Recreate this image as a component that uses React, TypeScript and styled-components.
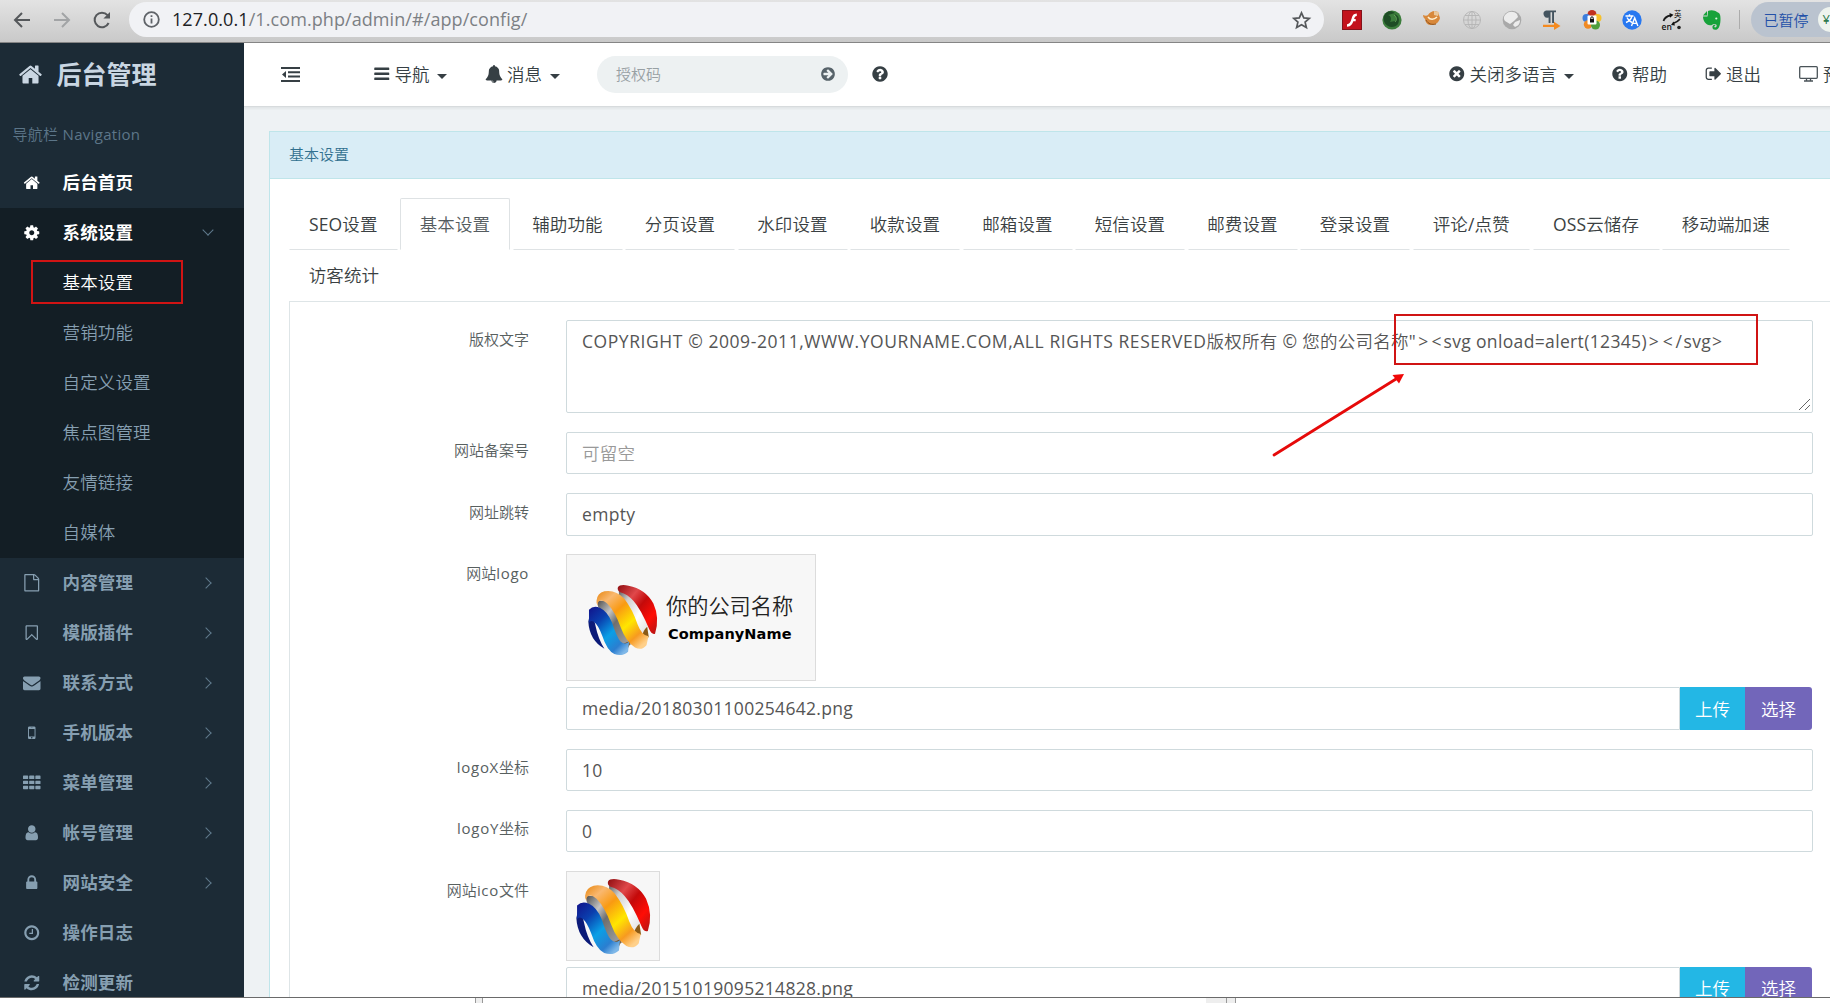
import React from "react";
import styled, { createGlobalStyle } from "styled-components";

const LIGHT = '"Open Sans", "Noto Sans CJK SC DemiLight", "Noto Sans CJK SC", sans-serif';
const BOLD = '"Open Sans", "Noto Sans CJK SC", sans-serif';

const Global = createGlobalStyle`
  * { box-sizing: border-box; }
  body { margin: 0; overflow: hidden; background: #fff; font-family: ${LIGHT}; font-size: 17.5px; color: #3a3f42; }
`;

/* ---------- icon glyphs, 1792-unit em square ---------- */
const RING = "M1664 896q0 209-103 385.5t-279.5 279.5-385.5 103-385.5-103-279.5-279.5-103-385.5 103-385.5 279.5-279.5 385.5-103 385.5 103 279.5 279.5 103 385.5z";
const GLYPHS: Record<string, string> = {
  home: "M1472 992v480q0 26-19 45t-45 19h-384v-384h-256v384h-384q-26 0-45-19t-19-45v-480q0-1 .5-3t.5-3l575-474 575 474q1 2 1 6zm223-69l-62 74q-8 9-21 11h-3q-13 0-21-7l-692-577-692 577q-12 8-24 7-13-2-21-11l-62-74q-8-10-7-23.5t11-21.5l719-599q32-26 76-26t76 26l244 204v-195q0-14 9-23t23-9h192q14 0 23 9t9 23v408l219 182q10 8 11 21.5t-7 23.5z",
  cog: "M1152 896q0-106-75-181t-181-75-181 75-75 181 75 181 181 75 181-75 75-181zm512-109v222q0 12-8 23t-20 13l-185 28q-19 54-39 91 35 50 107 138 10 12 10 25t-9 23q-27 37-99 108t-94 71q-12 0-26-9l-138-108q-44 23-91 38-16 136-29 186-7 28-36 28h-222q-14 0-24.5-8.5t-11.5-21.5l-28-184q-49-16-90-37l-141 107q-10 9-25 9-14 0-25-11-126-114-165-168-7-10-7-23 0-12 8-23 15-21 51-66.5t54-70.5q-27-50-41-99l-183-27q-13-2-21-12.5t-8-23.5v-222q0-12 8-23t19-13l186-28q14-46 39-92-40-57-107-138-10-12-10-24 0-10 9-23 26-36 98.5-107.5t94.5-71.5q13 0 26 10l138 107q44-23 91-38 16-136 29-186 7-28 36-28h222q14 0 24.5 8.5t11.5 21.5l28 184q49 16 90 37l142-107q9-9 24-9 13 0 25 10 129 119 165 170 7 8 7 22 0 12-8 23-15 21-51 66.5t-54 70.5q26 50 41 98l183 28q13 2 21 12.5t8 23.5z",
  file: "M1596 380q28 28 48 76t20 88v1152q0 40-28 68t-68 28h-1344q-40 0-68-28t-28-68v-1600q0-40 28-68t68-28h896q40 0 88 20t76 48zm-444-244v376h376q-10-29-22-41l-313-313q-12-12-41-22zm384 1528v-1024h-416q-40 0-68-28t-28-68v-416h-768v1536h1280z",
  bookmark: "M1408 256h-1024v1242l423-406 89-85 89 85 423 406v-1242zm12-128q23 0 44 9 33 13 52.5 41t19.5 62v1289q0 34-19.5 62t-52.5 41q-19 8-44 8-48 0-83-32l-441-424-441 424q-36 33-83 33-23 0-44-9-33-13-52.5-41t-19.5-62v-1289q0-34 19.5-62t52.5-41q21-9 44-9h1048z",
  envelope: "M1792 710v794q0 66-47 113t-113 47h-1472q-66 0-113-47t-47-113v-794q44 49 101 87 362 246 497 345 57 42 92.5 65.5t94.5 48 110 24.5h2q51 0 110-24.5t94.5-48 92.5-65.5q170-123 498-345 57-39 100-87zm0-294q0 79-49 151t-122 123q-376 261-468 325-10 7-42.5 31t-54 38.5-52 32.5-57.5 27-50 9h-2q-23 0-50-9t-57.5-27-52-32.5-54-38.5-42.5-31q-91-64-262-182.5t-205-142.5q-62-42-117-115.5t-55-136.5q0-78 41.5-130t118.5-52h1472q65 0 112.5 47t47.5 113z",
  mobile: "M976 1408q0-33-23.5-56.5t-56.5-23.5-56.5 23.5-23.5 56.5 23.5 56.5 56.5 23.5 56.5-23.5 23.5-56.5zm208-160v-704q0-13-9.5-22.5t-22.5-9.5h-512q-13 0-22.5 9.5t-9.5 22.5v704q0 13 9.5 22.5t22.5 9.5h512q13 0 22.5-9.5t9.5-22.5zm-192-848q0-16-16-16h-160q-16 0-16 16t16 16h160q16 0 16-16zm288-16v1024q0 52-38 90t-90 38h-512q-52 0-90-38t-38-90v-1024q0-52 38-90t90-38h512q52 0 90 38t38 90z",
  grid: "M64 160h400a64 64 0 0 1 64 64v224a64 64 0 0 1-64 64h-400a64 64 0 0 1-64-64v-224a64 64 0 0 1 64-64zm632 0h400a64 64 0 0 1 64 64v224a64 64 0 0 1-64 64h-400a64 64 0 0 1-64-64v-224a64 64 0 0 1 64-64zm632 0h400a64 64 0 0 1 64 64v224a64 64 0 0 1-64 64h-400a64 64 0 0 1-64-64v-224a64 64 0 0 1 64-64zM64 680h400a64 64 0 0 1 64 64v224a64 64 0 0 1-64 64h-400a64 64 0 0 1-64-64v-224a64 64 0 0 1 64-64zm632 0h400a64 64 0 0 1 64 64v224a64 64 0 0 1-64 64h-400a64 64 0 0 1-64-64v-224a64 64 0 0 1 64-64zm632 0h400a64 64 0 0 1 64 64v224a64 64 0 0 1-64 64h-400a64 64 0 0 1-64-64v-224a64 64 0 0 1 64-64zM64 1200h400a64 64 0 0 1 64 64v224a64 64 0 0 1-64 64h-400a64 64 0 0 1-64-64v-224a64 64 0 0 1 64-64zm632 0h400a64 64 0 0 1 64 64v224a64 64 0 0 1-64 64h-400a64 64 0 0 1-64-64v-224a64 64 0 0 1 64-64zm632 0h400a64 64 0 0 1 64 64v224a64 64 0 0 1-64 64h-400a64 64 0 0 1-64-64v-224a64 64 0 0 1 64-64z",
  user: "M1536 1399q0 109-62.5 187t-150.5 78h-854q-88 0-150.5-78t-62.5-187q0-85 8.5-160.5t31.5-152 58.5-131 94-89 134.5-34.5q131 128 313 128t313-128q76 0 134.5 34.5t94 89 58.5 131 31.5 152 8.5 160.5zm-256-887q0 159-112.5 271.5t-271.5 112.5-271.5-112.5-112.5-271.5 112.5-271.5 271.5-112.5 271.5 112.5 112.5 271.5z",
  lock: "M640 768h512v-192q0-106-75-181t-181-75-181 75-75 181v192zm832 96v576q0 40-28 68t-68 28h-960q-40 0-68-28t-28-68v-576q0-40 28-68t68-28h32v-192q0-184 132-316t316-132 316 132 132 316v192h32q40 0 68 28t28 68z",
  clock: "M1024 544v448q0 14-9 23t-23 9h-320q-14 0-23-9t-9-23v-64q0-14 9-23t23-9h224v-352q0-14 9-23t23-9h64q14 0 23 9t9 23zm416 352q0-148-73-273t-198-198-273-73-273 73-198 198-73 273 73 273 198 198 273 73 273-73 198-198 73-273z" + RING,
  refresh: "M1639 1056q0 5-1 7-64 268-268 434.5t-478 166.5q-146 0-282.5-55t-243.5-157l-129 129q-19 19-45 19t-45-19-19-45v-448q0-26 19-45t45-19h448q26 0 45 19t19 45-19 45l-137 137q71 66 161 102t187 36q134 0 250-65t186-179q11-17 53-117 8-23 30-23h192q13 0 22.5 9.5t9.5 22.5zm25-800v448q0 26-19 45t-45 19h-448q-26 0-45-19t-19-45 19-45l138-138q-148-137-349-137-134 0-250 65t-186 179q-11 17-53 117-8 23-30 23h-199q-13 0-22.5-9.5t-9.5-22.5v-7q65-268 270-434.5t480-166.5q146 0 284 55.5t245 156.5l130-129q19-19 45-19t45 19 19 45z",
  bars: "M192 256h1408q64 0 64 64v128q0 64-64 64h-1408q-64 0-64-64v-128q0-64 64-64zm0 512h1408q64 0 64 64v128q0 64-64 64h-1408q-64 0-64-64v-128q0-64 64-64zm0 512h1408q64 0 64 64v128q0 64-64 64h-1408q-64 0-64-64v-128q0-64 64-64z",
  bell: "M912 1696q0-16-16-16-59 0-101.5-42.5t-42.5-101.5q0-16-16-16t-16 16q0 73 51.5 124.5t124.5 51.5q16 0 16-16zm816-288q0 52-38 90t-90 38h-448q0 106-75 181t-181 75-181-75-75-181h-448q-52 0-90-38t-38-90q50-42 91-88t85-119.5 74.5-158.5 50-206 19.5-260q0-152 117-282.5t307-158.5q-8-19-8-39 0-40 28-68t68-28 68 28 28 68q0 20-8 39 190 28 307 158.5t117 282.5q0 139 19.5 260t50 206 74.5 158.5 85 119.5 91 88z",
  times: "M1277 1122q0-26-19-45l-181-181 181-181q19-19 19-45 0-27-19-46l-90-90q-19-19-46-19-26 0-45 19l-181 181-181-181q-19-19-45-19-27 0-46 19l-90 90q-19 19-19 46 0 26 19 45l181 181-181 181q-19 19-19 45 0 27 19 46l90 90q19 19 46 19 26 0 45-19l181-181 181 181q19 19 45 19 27 0 46-19l90-90q19-19 19-46z" + RING,
  question: "M1024 1376v-192q0-14-9-23t-23-9h-192q-14 0-23 9t-9 23v192q0 14 9 23t23 9h192q14 0 23-9t9-23zm256-672q0-88-55.5-163t-138.5-116-170-41q-243 0-371 213-15 24 8 42l132 100q7 6 19 6 16 0 25-12 53-68 86-92 34-24 86-24 48 0 85.5 26t37.5 59q0 38-20 61t-68 45q-63 28-115.5 86.5t-52.5 125.5v36q0 14 9 23t23 9h192q14 0 23-9t9-23q0-19 21.5-49.5t54.5-49.5q32-18 49-28.5t46-35 44.5-48 28-60.5 12.5-81z" + RING,
  signout: "M704 1440q0 4 1 20t.5 26.5-3 23.5-10 19.5-20.5 6.5h-320q-119 0-203.5-84.5t-84.5-203.5v-704q0-119 84.5-203.5t203.5-84.5h320q13 0 22.5 9.5t9.5 22.5q0 4 1 20t.5 26.5-3 23.5-10 19.5-20.5 6.5h-320q-66 0-113 47t-47 113v704q0 66 47 113t113 47h312l11.5 1 11.5 3 8 5.5 7 9 2 13.5zm928-544q0 26-19 45l-544 544q-19 19-45 19t-45-19-19-45v-288h-448q-26 0-45-19t-19-45v-384q0-26 19-45t45-19h448v-288q0-26 19-45t45-19 45 19l544 544q19 19 19 45z",
  go: "M1413 896q0-27-18-45l-91-91-362-362q-18-18-45-18t-45 18l-91 91q-18 18-18 45t18 45l189 189h-502q-26 0-45 19t-19 45v128q0 26 19 45t45 19h502l-189 189q-19 19-19 45t19 45l91 91q18 18 45 18t45-18l362-362 91-91q18-18 18-45z" + RING,
};

const Svg = styled.svg`display: block; flex: none; overflow: visible;`;
const Glyph = ({ name, size = 17.5 }: { name: string; size?: number }) => (
  <Svg width={size} height={size} viewBox="0 0 1792 1792" fill="currentColor" fillRule="evenodd">
    <path d={GLYPHS[name]} />
  </Svg>
);

/* ---------- browser bar ---------- */
const Page = styled.div`position: relative; width: 1830px; height: 1003px; display: flex; flex-direction: column; overflow: hidden;`;
const Browser = styled.div`
  flex: none; height: 43px; display: flex; align-items: flex-start; padding-top: 2px; overflow: hidden;
  background: linear-gradient(#e3e3e3, #c9c9c9); border-bottom: 1px solid #858585;
`;
const NavIcons = styled.div`flex: none; display: flex; align-items: center; height: 35px; padding-left: 12px; gap: 20px; width: 129px;`;
const Omnibox = styled.div`
  flex: none; width: 1195px; height: 35px; border-radius: 18px; background: #f1f2f5; display: flex; align-items: center; padding: 0 13px 0 14px;
`;
const Url = styled.div`
  flex: 1; margin-left: 12px; font-size: 18px; letter-spacing: 0.08px; color: #7c8084; line-height: 33px;
  b { font-weight: 400; color: #202124; }
`;
const Extensions = styled.div`flex: none; display: flex; align-items: center; height: 35px; margin-left: 17.5px; gap: 20px;`;
const Divider = styled.div`flex: none; width: 1px; height: 19px; margin: 8px 0 0 17px; background: #acacac;`;
const Paused = styled.div`
  flex: none; width: 110px; height: 35px; margin-left: 11px; border-radius: 18px 0 0 18px; background: #bac3cf;
  display: flex; align-items: center; padding-left: 13px; gap: 9px; color: #2350a8; font-size: 15px; white-space: nowrap;
`;
const Avatar = styled.div`
  flex: none; width: 25px; height: 25px; border-radius: 50%; background: #eef3ee; color: #2f7a4c; font-size: 13px; line-height: 24px; padding-left: 5px;
`;

const Ext = ({ children }: { children: React.ReactNode }) => <Svg width="20" height="20" viewBox="0 0 20 20">{children}</Svg>;

const BrowserBar = () => (
  <Browser>
    <NavIcons>
      <Svg width="20" height="18" viewBox="0 0 20 18" fill="none" stroke="#55585b" strokeWidth="2"><path d="M18 9H3M10 2L3 9l7 7" /></Svg>
      <Svg width="20" height="18" viewBox="0 0 20 18" fill="none" stroke="#a2a4a6" strokeWidth="2"><path d="M2 9h15M10 2l7 7-7 7" /></Svg>
      <Svg width="20" height="18" viewBox="0 0 20 18" fill="none" stroke="#55585b" strokeWidth="2"><path d="M16.6 12A7.3 7.3 0 1 1 15.5 4.2" /><path d="M18 1v6.6h-6.6z" fill="#55585b" stroke="none" /></Svg>
    </NavIcons>
    <Omnibox>
      <Svg width="17" height="17" viewBox="0 0 17 17" fill="none" stroke="#5f6368" strokeWidth="1.8"><circle cx="8.5" cy="8.5" r="7.3" /><path d="M8.5 7.6v5M8.5 4.2v1.8" /></Svg>
      <Url><b>127.0.0.1</b>/1.com.php/admin/#/app/config/</Url>
      <Svg width="19" height="18" viewBox="0 0 19 18" fill="none" stroke="#55585b" strokeWidth="1.7"><path d="M9.5 1.8l2.3 5.1 5.5.5-4.2 3.7 1.3 5.5-4.9-2.9-4.9 2.9 1.3-5.5-4.1-3.7 5.5-.5z" /></Svg>
    </Omnibox>
    <Extensions>
      <Ext>
        <rect x=".5" y=".5" width="19" height="19" fill="#c3121c" stroke="#84121a" />
        <path d="M14.8 3.6c-3.3.2-4.2 2-5 4.3-1 3-1.7 5.9-4.8 6.4v2.5c4.3-.3 5.5-3.3 6.3-5.6h2.4V8.900h-1.600c.6-1.700 1.100-2.800 2.700-2.900z" fill="#fff" />
      </Ext>
      <Ext>
        <circle cx="10" cy="10" r="9.600" fill="#3c7d3c" /><path d="M2 6C4 1 9 0 13 3L6 5c3 1 4 4 2 7l5-1c2-2 1-6-1-7 5 1 6 6 4 10-2 3-7 4-10 2C2 14 1 9 2 6z" fill="#1e4d25" /><path d="M12 5c3 2 3 5 1 7" stroke="#69a85c" fill="none" />
      </Ext>
      <Ext>
        <path d="M1 5c2 1 4 1 5 0 1-2 4-4 7-4l3 1 1 3 1 3c-1 4-4 7-8 7-5 0-6-2-7-6C2 8 1 7 1 5z" fill="#d8883a" /><path d="M12 1l5 1-1 4-4-1z" fill="#e9c79a" /><path d="M6 7c2 3 6 3 9 0" stroke="#fff0d0" fill="none" strokeWidth="1.500" /><path d="M4 10c2 4 6 5 10 4" stroke="#8f5522" fill="none" />
      </Ext>
      <Ext>
        <g fill="none" stroke="#b4b4b4" strokeWidth=".9"><circle cx="10" cy="10" r="8.500" /><ellipse cx="10" cy="10" rx="4" ry="8.500" /><path d="M10 1.500v17M1.500 10h17M3 5.500h14M3 14.500h14" /></g>
      </Ext>
      <Ext>
        <circle cx="10" cy="10" r="9.300" fill="#a9a9a9" /><path d="M4 4c3-3 8-3 11 0l1 3-4 4-4 3-5-3C1 8 2 6 4 4zM13 12l5-2c0 4-2 6-5 7l-2-2z" fill="#ececec" />
      </Ext>
      <Ext>
        <path d="M6 .5h10v1.800h-2V13h-1.900V2.300h-1.600V13H8.600V7.500A3.600 3.600 0 0 1 6 .5z" fill="#44545f" transform="translate(-2 0)" /><path d="M1 14.800h11v-3l6.500 4.200-6.500 4v-3H1z" fill="#f58a1f" />
      </Ext>
      <Ext>
        <circle cx="10" cy="4.500" r="4.500" fill="#c1301f" /><circle cx="4.500" cy="8" r="4" fill="#3b7ddd" /><circle cx="15.500" cy="8" r="4" fill="#f6c12c" /><circle cx="6" cy="14.500" r="4.200" fill="#f08a24" /><circle cx="13.500" cy="15" r="4.500" fill="#4f9e3b" /><rect x="5.500" y="5.500" width="9" height="9" rx="1" fill="#fff" /><rect x="8" y="9" width="4" height="3.500" fill="#111" /><path d="M8.800 9V8a1.200 1.200 0 0 1 2.400 0v1" stroke="#111" fill="none" />
      </Ext>
      <Ext>
        <circle cx="10" cy="10" r="9.700" fill="#2878f0" /><g fill="none" stroke="#fff" strokeWidth="1.400"><path d="M3.500 6h8M7.500 4.300V6M10 6c-.8 3-3 5.300-6 6.500M5 7.500c1 2.300 2.700 4 5 5" /><path d="M9.500 16l3.200-8 3.200 8M10.600 13.400h4.200" /></g>
      </Ext>
      <Ext>
        <g fill="none" stroke="#1c1c1c"><path d="M1.500 11c1-3 4-5 7-5.500" strokeWidth="1.800" /><path d="M11 13.500c3-1 5-2 7-4.500" strokeWidth="1.800" /></g>
        <path d="M7.500 3l4 1.800-3.500 3zM11.500 11.500l-2.500 3.500 4 .5z" fill="#111" />
        <text x="-.5" y="19.500" fontFamily="Open Sans, sans-serif" fontSize="8.500" fontWeight="600" fill="#111">en</text>
        <text x="12" y="7" fontFamily="Noto Sans CJK SC, sans-serif" fontSize="7.500" fill="#111">英</text>
        <circle cx="17" cy="17.500" r="1.800" fill="#222" />
      </Ext>
      <Ext>
        <path d="M6 1c3-1.500 7-.8 9 1 3 1 3.500 3 3.500 7 0 5-1 9-3.500 10.500-3 1-5-.5-4.500-3 .3-1.500 2-2 3-1.500-.2 1-1.300 1-1.300 2 .8 1 2.300.3 2.500-1 .2-1.500-1-2.200-2.700-2-1.500.2-2 1.500-4 1.300C4 15 1 11 1 6.500h4.500z" fill="#17a23a" /><path d="M1 5.500L5 1v4.500z" fill="#17a23a" /><circle cx="14.300" cy="8.500" r="1.100" fill="#d9f0dd" />
      </Ext>
    </Extensions>
    <Divider />
    <Paused>已暂停<Avatar>¥</Avatar></Paused>
  </Browser>
);

/* ---------- sidebar ---------- */
const Body = styled.div`flex: none; height: 954px; display: flex; overflow: hidden;`;
const Side = styled.nav`flex: none; width: 244px; background: #1c2b36; color: #869fb1;`;
const Brand = styled.div`
  height: 62px; display: flex; align-items: center; padding-left: 18px; gap: 13.5px; color: #c9d6e2; font: 700 25px/58px ${BOLD};
`;
const SideTitle = styled.div`height: 53px; padding-left: 12.5px; line-height: 58px; font-size: 15px; color: #5c7689; letter-spacing: 0.3px;`;
const Group = styled.div<{ $open?: boolean }>`background: ${p => (p.$open ? "#131e25" : "transparent")}; color: ${p => (p.$open ? "#fff" : "inherit")};`;
const Item = styled.a<{ $on?: boolean }>`
  height: 50px; display: flex; align-items: center; font: 700 17.5px/46px ${BOLD}; color: ${p => (p.$on ? "#fff" : "inherit")};
`;
const ItemIcon = styled.span`width: 62.5px; padding-left: 1px; display: flex; justify-content: center;`;
const ItemText = styled.span`width: 136.5px; padding-bottom: 2px; letter-spacing: 0.15px;`;
const Chevron = styled.span<{ $down?: boolean }>`
  width: 8px; height: 8px; margin-left: ${p => (p.$down ? 5 : 2.5)}px; margin-top: ${p => (p.$down ? -6 : 0)}px;
  border: solid #5f7a8c; border-width: 0 1.5px 1.5px 0; transform: rotate(${p => (p.$down ? 45 : -45)}deg);
`;
const SubItem = styled.a<{ $on?: boolean }>`
  display: block; height: 50px; padding-left: 62.5px; line-height: 48px; letter-spacing: 0.15px; color: ${p => (p.$on ? "#fff" : "#869fb1")};
`;

const SUB = ["基本设置", "营销功能", "自定义设置", "焦点图管理", "友情链接", "自媒体"];
const MENU: [string, string, boolean][] = [
  ["file", "内容管理", true], ["bookmark", "模版插件", true], ["envelope", "联系方式", true], ["mobile", "手机版本", true],
  ["grid", "菜单管理", true], ["user", "帐号管理", true], ["lock", "网站安全", true], ["clock", "操作日志", false], ["refresh", "检测更新", false],
];

const Sidebar = () => (
  <Side>
    <Brand><Glyph name="home" size={25} />后台管理</Brand>
    <SideTitle>导航栏 Navigation</SideTitle>
    <Item $on><ItemIcon><Glyph name="home" /></ItemIcon><ItemText>后台首页</ItemText></Item>
    <Group $open>
      <Item><ItemIcon><Glyph name="cog" /></ItemIcon><ItemText>系统设置</ItemText><Chevron $down /></Item>
      {SUB.map((s, i) => <SubItem key={s} $on={i === 0}>{s}</SubItem>)}
    </Group>
    {MENU.map(([icon, label, more]) => (
      <Item key={label}><ItemIcon><Glyph name={icon} /></ItemIcon><ItemText>{label}</ItemText>{more && <Chevron />}</Item>
    ))}
  </Side>
);

/* ---------- top bar ---------- */
const Main = styled.main`flex: none; width: 1640px; background: #eef2f4;`;
const Top = styled.header`
  height: 64px; display: flex; align-items: center; background: #fff; padding-bottom: 1px;
  border-bottom: 1px solid #d7dbdd; box-shadow: 0 2px 2px rgba(0, 0, 0, 0.05); color: #363f44;
`;
const TopItem = styled.div<{ $left: number; $gap?: number }>`
  flex: none; display: flex; align-items: center; gap: ${p => p.$gap ?? 4}px; margin-left: ${p => p.$left}px; white-space: nowrap; line-height: 60px;
`;
const Caret = styled.i`border: 5px solid transparent; border-top-color: currentColor; border-bottom: 0; margin: 4px 0 0 3px;`;
const Search = styled.div`
  flex: none; margin-left: 37.5px; width: 251px; height: 37px; border-radius: 19px; background: #edf1f2; display: flex; align-items: center;
  justify-content: space-between; padding: 0 12.5px 0 19px; color: #98a0a4; font-size: 15px; line-height: 34px; padding-bottom: 1px;
`;
const GoIcon = styled.span`color: #57636a;`;

const TopBar = () => (
  <Top>
    <TopItem $left={37}><Svg width="19" height="15" viewBox="0 0 19 15" fill="#363f44"><path d="M0 0h19v2H0zM7 4.300h12v2H7zM7 8.600h12v2H7zM0 13h19v2H0zM5 4v7L1 7.500z" /></Svg></TopItem>
    <TopItem $left={73}><Glyph name="bars" />导航<Caret /></TopItem>
    <TopItem $left={38} $gap={4.5}><Glyph name="bell" size={18} />消息<Caret /></TopItem>
    <Search>授权码<GoIcon><Glyph name="go" size={16} /></GoIcon></Search>
    <TopItem $left={23}><Glyph name="question" size={18} /></TopItem>
    <TopItem $left={559}><Glyph name="times" />关闭多语言<Caret /></TopItem>
    <TopItem $left={36.5}><Glyph name="question" />帮助</TopItem>
    <TopItem $left={37.5}><Glyph name="signout" />退出</TopItem>
    <TopItem $left={38} $gap={5}>
      <Svg width="19" height="16" viewBox="0 0 19 16" fill="none" stroke="#4a5358" strokeWidth="1.300"><rect x=".7" y=".7" width="17.600" height="11.600" rx="1" /><path d="M7.500 12.500v2M11.500 12.500v2M5 15h9" /></Svg>
      预览
    </TopItem>
  </Top>
);

/* ---------- settings panel ---------- */
const Panel = styled.section`margin: 24px 0 0 25px; background: #fff; border: 1px solid #bfe5ea; height: 880px;`;
const PanelHead = styled.div`height: 47px; padding-left: 19px; line-height: 45px; font-size: 15px; color: #31708f; background: #d9edf6; border-bottom: 1px solid #bfe5ea;`;
const PanelBody = styled.div`padding: 19px 0 0 19px;`;
const Tabs = styled.div`display: flex; flex-wrap: wrap; width: 1560px;`;
const Tab = styled.a<{ $w: number; $on?: boolean; $last?: boolean }>`
  width: ${p => p.$w}px; height: 51.5px; margin-right: 2.5px; text-align: center; line-height: ${p => (p.$last ? 48 : 50)}px; letter-spacing: 0.12px;
  color: ${p => (p.$on ? "#555c60" : "#3a3f42")};
  border: 1px solid transparent; border-bottom-color: ${p => (p.$on || p.$last ? "transparent" : "#dfe3e5")};
  ${p => p.$on && "border-color: #dee2e4; border-bottom-color: transparent; border-radius: 2px 2px 0 0;"}
`;
const TabPane = styled.div`border: solid #dee5e7; border-width: 1px 0 0 1px; padding-top: 18px; height: 700px;`;
const Row = styled.div`display: flex; margin-bottom: 18.75px;`;
const Label = styled.label`width: 239px; margin-right: 37px; padding-top: 8.7px; text-align: right; font-size: 15px; line-height: 21px; color: #58605f;`;
const Control = styled.div`width: 1247px;`;
const Input = styled.div<{ $h?: number; $hint?: boolean; $joined?: boolean }>`
  position: relative; flex: 1; height: ${p => p.$h ?? 42.5}px; border: 1px solid #cfdadd; border-radius: ${p => (p.$joined ? "2px 0 0 2px" : "2px")};
  padding: 0 15px; line-height: 41px; color: ${p => (p.$hint ? "#999" : "#555")}; white-space: nowrap; background: #fff; letter-spacing: 0.3px;
`;
const Spaced = styled.span<{ $ls: number }>`letter-spacing: ${p => p.$ls}px;`;
const Grip = styled.svg`position: absolute; right: 2px; bottom: 2px;`;
const Upload = styled.div`display: flex; width: 1246px;`;
const Button = styled.button<{ $bg: string; $w: number; $end?: boolean }>`
  width: ${p => p.$w}px; border: 0; padding: 0 0 1px; background: ${p => p.$bg}; color: #fff; font: 400 17.5px ${LIGHT}; border-radius: ${p => (p.$end ? "0 3px 3px 0" : "0")};
`;
const Thumb = styled.div<{ $w: number; $h: number; $pad: string }>`
  width: ${p => p.$w}px; height: ${p => p.$h}px; margin-bottom: 6px; padding: ${p => p.$pad}; border: 1px solid #dcdcdc; background: #f7f7f7; display: flex;
`;
const Company = styled.div`margin: 6px 0 0 8px; color: #222; white-space: nowrap;`;
const CompanyCn = styled.div`font-size: 21.2px; line-height: 30px;`;
const CompanyEn = styled.div`font: 700 14.5px/17px "DejaVu Sans", sans-serif; color: #000; margin: 5px 0 0 2px; letter-spacing: 0.1px;`;

const Ball = ({ id, size }: { id: string; size: number }) => (
  <Svg width={size} height={size} viewBox="143 165 211 213">
    <defs>
      <linearGradient id={id + "r"} x1="0" y1="0" x2="1" y2="1"><stop offset="0" stopColor="#8e0d10" /><stop offset=".3" stopColor="#e0484a" /><stop offset=".5" stopColor="#c40a0a" /><stop offset=".75" stopColor="#ff0d05" /><stop offset="1" stopColor="#b01515" /></linearGradient>
      <linearGradient id={id + "y"} x1="0" y1="0" x2=".8" y2="1"><stop offset="0" stopColor="#e8860e" /><stop offset=".2" stopColor="#f9b870" /><stop offset=".4" stopColor="#f99a12" /><stop offset=".65" stopColor="#ffe600" /><stop offset=".85" stopColor="#f79a20" /><stop offset="1" stopColor="#ffd08a" /></linearGradient>
      <linearGradient id={id + "b"} x1="0" y1="0" x2=".8" y2="1"><stop offset="0" stopColor="#12128a" /><stop offset=".3" stopColor="#0a3fae" /><stop offset=".6" stopColor="#0a9fe6" /><stop offset=".85" stopColor="#2b7ed0" /><stop offset="1" stopColor="#7fb8e8" /></linearGradient>
      <linearGradient id={id + "g"} x1="0" y1="0" x2="1" y2="1"><stop offset="0" stopColor="#4a4a4a" /><stop offset=".3" stopColor="#c4c4c4" /><stop offset=".5" stopColor="#6e6e6e" /><stop offset="1" stopColor="#a9a9a9" /></linearGradient>
      <linearGradient id={id + "w"} x1="0" y1="0" x2="1" y2="1"><stop offset="0" stopColor="#5b5b5b" /><stop offset=".25" stopColor="#cfcfcf" /><stop offset=".6" stopColor="#fff" /><stop offset="1" stopColor="#d9d9d9" /></linearGradient>
    </defs>
    <path d="M236 180q38 4 62 46 22 40 26 72l-12 30q-22-24-36-58-18-46-40-70z" fill={`url(#${id}w)`} />
    <path d="M170 212q0 22 12 32 20 20 34 58 14 42 34 50l24-6q-20-28-32-60-16-48-40-72z" fill={`url(#${id}g)`} />
    <path d="M250 344l18-8 1 10-6 12q-11-2-13-14z" fill="#7a4a10" />
    <path d="M322 292l5 32-22 0q4-20 17-32z" fill="#8a5a16" />
    <path d="M147 258q14 6 18 32 8 40 27 69-46-26-49-83z" fill="#0b1a78" />
    <path d="M145 240q14-14 34-5 22 10 36 44 14 44 26 58 12 12 26 1l-3 30q-18 16-42 7-22-10-37-56-12-32-25-42-10-6-15 2z" fill={`url(#${id}b)`} />
    <path d="M168 212q2-22 24-28 34-6 60 22 26 34 41 79 13 34 33 36l-6 27q-15 18-35 7-27-17-43-60-18-50-41-73-17-14-25-8-6 4-4 14-6-8-4-16z" fill={`url(#${id}y)`} />
    <path d="M233 172q6-10 32-5 52 10 76 54 20 44 5 92-10 4-18-14-26-62-48-86-18-20-40-26-10-6-7-15z" fill={`url(#${id}r)`} />
  </Svg>
);

const TABS: [string, number][] = [
  ["SEO设置", 108.5], ["基本设置", 110], ["辅助功能", 110], ["分页设置", 110], ["水印设置", 110], ["收款设置", 110], ["邮箱设置", 110],
  ["短信设置", 110], ["邮费设置", 110], ["登录设置", 110], ["评论/点赞", 117.5], ["OSS云储存", 127], ["移动端加速", 127.5], ["访客统计", 110],
];

/* Latin runs inside a label are set slightly wider than the Chinese around them. */
const Field = ({ label, children }: { label: string; children: React.ReactNode }) => (
  <Row>
    <Label>{label.split(/([A-Za-z]+)/).map((part, i) => (i % 2 ? <Spaced key={i} $ls={0.7}>{part}</Spaced> : part))}</Label>
    <Control>{children}</Control>
  </Row>
);

const FilePick = ({ value }: { value: string }) => (
  <Upload>
    <Input $joined>{value}</Input>
    <Button $bg="#23b7e5" $w={65}>上传</Button>
    <Button $bg="#7266ba" $w={67} $end>选择</Button>
  </Upload>
);

const Settings = () => (
  <Panel>
    <PanelHead>基本设置</PanelHead>
    <PanelBody>
      <Tabs>{TABS.map(([t, w], i) => <Tab key={t} $w={w} $on={i === 1} $last={i === 13}>{t}</Tab>)}</Tabs>
      <TabPane>
        <Field label="版权文字">
          <Input $h={93}>
            <Spaced $ls={0.57}>COPYRIGHT © 2009-2011,WWW.YOURNAME.COM,ALL RIGHTS RESERVED</Spaced>
            <Spaced $ls={0.28}>版权所有 © 您的公司名称</Spaced>
            <Spaced $ls={2.4}>"</Spaced>
            <Spaced $ls={3.2}>&gt;</Spaced>
            <Spaced $ls={2}>&lt;</Spaced>
            <Spaced $ls={0.35}>svg onload=alert(12345</Spaced>
            <Spaced $ls={2.2}>)</Spaced>
            <Spaced $ls={4}>&gt;</Spaced>
            <Spaced $ls={2.6}>&lt;</Spaced>
            <Spaced $ls={1.6}>/</Spaced>
            <Spaced $ls={0.3}>sv</Spaced>
            <Spaced $ls={1.4}>g&gt;</Spaced>
            <Grip width="11" height="11" viewBox="0 0 11 11" stroke="#666" fill="none"><path d="M0 11L11 0M6 11l5-5" /></Grip>
          </Input>
        </Field>
        <Field label="网站备案号"><Input $hint>可留空</Input></Field>
        <Field label="网址跳转"><Input>empty</Input></Field>
        <Field label="网站logo">
          <Thumb $w={250} $h={127} $pad="30px 0 0 21px">
            <Ball id="a" size={70} />
            <Company><CompanyCn>你的公司名称</CompanyCn><CompanyEn>CompanyName</CompanyEn></Company>
          </Thumb>
          <FilePick value="media/20180301100254642.png" />
        </Field>
        <Field label="logoX坐标"><Input>10</Input></Field>
        <Field label="logoY坐标"><Input>0</Input></Field>
        <Field label="网站ico文件">
          <Thumb $w={94} $h={90} $pad="7px 9px"><Ball id="b" size={75} /></Thumb>
          <FilePick value="media/20151019095214828.png" />
        </Field>
      </TabPane>
    </PanelBody>
  </Panel>
);

/* ---------- bottom edge and red marks ---------- */
const Bottom = styled.div`flex: none; height: 6px; border-top: 1px solid #6a6a6a; background: #fff; display: flex;`;
const Split = styled.i<{ $left: number; $w: number; $line?: boolean }>`
  margin-left: ${p => p.$left}px; width: ${p => p.$w}px; background: #eee; ${p => p.$line && "border: solid #999; border-width: 0 1px;"}
`;
const Mark = styled.div<{ $x: number; $y: number; $w: number; $h: number }>`
  position: absolute; left: ${p => p.$x}px; top: ${p => p.$y}px; width: ${p => p.$w}px; height: ${p => p.$h}px; border: 2px solid #d01414;
`;
const Arrow = styled.svg`position: absolute; left: 1270px; top: 370px;`;

export default function App() {
  return (
    <Page>
      <Global />
      <BrowserBar />
      <Body>
        <Sidebar />
        <Main><TopBar /><Settings /></Main>
      </Body>
      <Bottom><Split $left={475} $w={8} $line /><Split $left={723} $w={20} /><Split $left={0} $w={10} $line /></Bottom>
      <Mark $x={31} $y={260} $w={152} $h={44} />
      <Mark $x={1394} $y={314} $w={364} $h={51} />
      <Arrow width="140" height="90" viewBox="0 0 140 90"><path d="M4 85L126 9" stroke="#e60a0a" strokeWidth="2.8" strokeLinecap="round" /><path d="M134 4l-11.5 1 6.5 8.5z" fill="#f00808" /></Arrow>
    </Page>
  );
}
